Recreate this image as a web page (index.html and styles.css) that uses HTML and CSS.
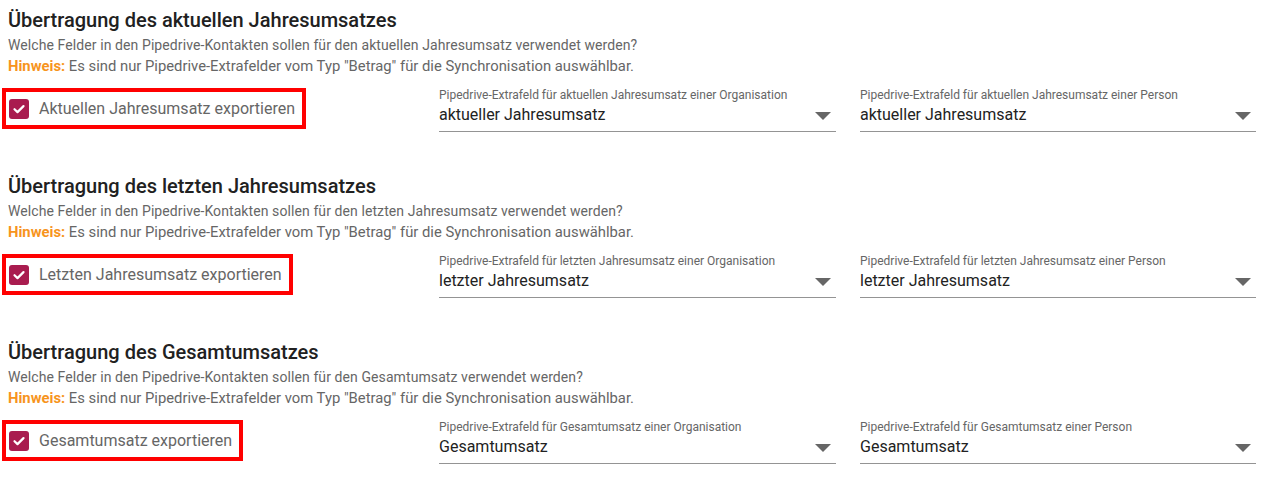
FILE: index.html
```html
<!DOCTYPE html>
<html lang="de">
<head>
    <meta charset="UTF-8">
    <meta name="viewport" content="width=device-width, initial-scale=1.0">
    <title>Pipedrive Umsatz-Synchronisation</title>
    <link rel="stylesheet" href="styles.css">
</head>
<body>

    <!-- Aktueller Jahresumsatz -->
    <section class="sync-section">
        <h2>Übertragung des aktuellen Jahresumsatzes</h2>
        <p class="desc">Welche Felder in den Pipedrive-Kontakten sollen für den aktuellen Jahresumsatz verwendet werden?</p>
        <p class="desc note"><span class="hint">Hinweis:</span> Es sind nur Pipedrive-Extrafelder vom Typ "Betrag" für die Synchronisation auswählbar.</p>
        <div class="field-row">
            <div class="check-cell">
                <label class="check-box">
                    <span class="check"><svg viewBox="0 0 20 20"><path d="M5.5 10.2l3 2.9 6-6" /></svg></span>
                    Aktuellen Jahresumsatz exportieren
                </label>
            </div>
            <div class="select-field">
                <div class="select-label">Pipedrive-Extrafeld für aktuellen Jahresumsatz einer Organisation</div>
                <div class="select-value">aktueller Jahresumsatz <span class="arrow"></span></div>
            </div>
            <div class="select-field">
                <div class="select-label">Pipedrive-Extrafeld für aktuellen Jahresumsatz einer Person</div>
                <div class="select-value">aktueller Jahresumsatz <span class="arrow"></span></div>
            </div>
        </div>
    </section>

    <!-- Letzter Jahresumsatz -->
    <section class="sync-section">
        <h2>Übertragung des letzten Jahresumsatzes</h2>
        <p class="desc">Welche Felder in den Pipedrive-Kontakten sollen für den letzten Jahresumsatz verwendet werden?</p>
        <p class="desc note"><span class="hint">Hinweis:</span> Es sind nur Pipedrive-Extrafelder vom Typ "Betrag" für die Synchronisation auswählbar.</p>
        <div class="field-row">
            <div class="check-cell">
                <label class="check-box">
                    <span class="check"><svg viewBox="0 0 20 20"><path d="M5.5 10.2l3 2.9 6-6" /></svg></span>
                    Letzten Jahresumsatz exportieren
                </label>
            </div>
            <div class="select-field">
                <div class="select-label">Pipedrive-Extrafeld für letzten Jahresumsatz einer Organisation</div>
                <div class="select-value">letzter Jahresumsatz <span class="arrow"></span></div>
            </div>
            <div class="select-field">
                <div class="select-label">Pipedrive-Extrafeld für letzten Jahresumsatz einer Person</div>
                <div class="select-value">letzter Jahresumsatz <span class="arrow"></span></div>
            </div>
        </div>
    </section>

    <!-- Gesamtumsatz -->
    <section class="sync-section">
        <h2>Übertragung des Gesamtumsatzes</h2>
        <p class="desc">Welche Felder in den Pipedrive-Kontakten sollen für den Gesamtumsatz verwendet werden?</p>
        <p class="desc note"><span class="hint">Hinweis:</span> Es sind nur Pipedrive-Extrafelder vom Typ "Betrag" für die Synchronisation auswählbar.</p>
        <div class="field-row">
            <div class="check-cell">
                <label class="check-box">
                    <span class="check"><svg viewBox="0 0 20 20"><path d="M5.5 10.2l3 2.9 6-6" /></svg></span>
                    Gesamtumsatz exportieren
                </label>
            </div>
            <div class="select-field">
                <div class="select-label">Pipedrive-Extrafeld für Gesamtumsatz einer Organisation</div>
                <div class="select-value">Gesamtumsatz <span class="arrow"></span></div>
            </div>
            <div class="select-field">
                <div class="select-label">Pipedrive-Extrafeld für Gesamtumsatz einer Person</div>
                <div class="select-value">Gesamtumsatz <span class="arrow"></span></div>
            </div>
        </div>
    </section>

</body>
</html>
```

FILE: styles.css
```css
/* General */
body {
    font-family: Roboto, 'Noto Sans', sans-serif;
    color: #222;
    margin: 0;
    padding: 8px 20px 0 8px;
    background: #fff;
}

/* Section */
.sync-section {
    margin-bottom: 42px;
}

.sync-section h2 {
    font-size: 20px;
    font-weight: 500;
    line-height: 24px;
    margin: 0 0 3px 0;
    color: #212121;
}

.desc {
    font-size: 14px;
    letter-spacing: 0.09px;
    line-height: 21px;
    margin: 0;
    color: #666;
}

/* the note line renders a little larger */
.note {
    font-size: 14.8px;
    letter-spacing: 0;
}

.hint {
    color: #f7941d;
    font-weight: 700;
}

/* Row with checkbox + two selects */
.field-row {
    display: grid;
    grid-template-columns: 407px 397px 396px;
    column-gap: 24px;
    align-items: start;
    margin-top: 10px;
}

.check-cell {
    padding-top: 1px;
}

/* Red highlight around the checkbox */
.check-box {
    display: inline-flex;
    align-items: center;
    gap: 10px;
    height: 33px;
    padding: 0 7px 0 3px;
    margin-left: -6px;
    border: 4px solid #ff0000;
    font-size: 16px;
    line-height: 20px;
    color: #666;
}

.check {
    width: 20px;
    height: 20px;
    border-radius: 3px;
    background: #a91c4f;
    display: flex;
    align-items: center;
    justify-content: center;
}

.check svg {
    width: 20px;
    height: 20px;
}

.check path {
    fill: none;
    stroke: #fff;
    stroke-width: 2.2;
    stroke-linecap: round;
    stroke-linejoin: round;
}

/* Select fields */
.select-field {
    border-bottom: 1px solid #949494;
    padding-bottom: 4px;
}

.select-label {
    font-size: 12px;
    line-height: 16px;
    color: #666;
}

.select-value {
    display: flex;
    justify-content: space-between;
    align-items: center;
    font-size: 16px;
    line-height: 24px;
    color: #222;
}

.arrow {
    width: 0;
    height: 0;
    border-left: 8px solid transparent;
    border-right: 8px solid transparent;
    border-top: 8px solid #666;
    margin-right: 5px;
    margin-top: 2px;
}
```
